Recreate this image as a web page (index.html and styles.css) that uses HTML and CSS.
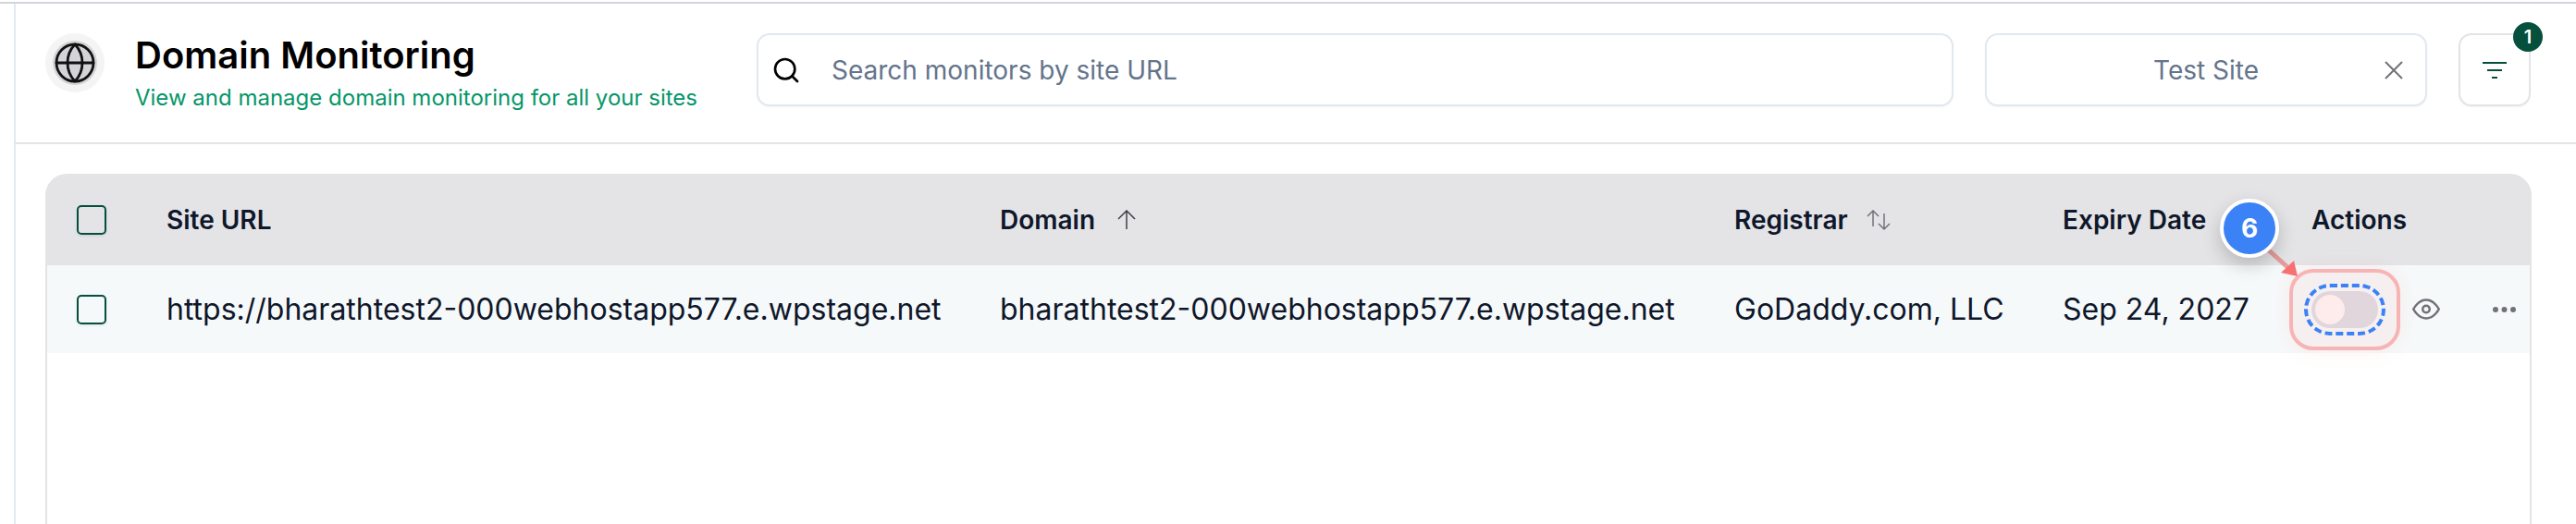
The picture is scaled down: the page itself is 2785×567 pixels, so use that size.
FILE: index.html
```html
<!DOCTYPE html>
<html lang="en">
<head>
<meta charset="utf-8">
<title>Domain Monitoring</title>
<link rel="stylesheet" href="styles.css">
</head>
<body>
<div class="page">
  <header class="topbar">
    <div class="title-group">
      <div class="globe-wrap">
        <div class="globe-inner">
          <svg class="globe" viewBox="0 0 24 24" fill="none" stroke="currentColor" stroke-width="1.4" stroke-linecap="round" stroke-linejoin="round"><circle cx="12" cy="12" r="10"/><path d="M12 2a14.5 14.5 0 0 0 0 20 14.5 14.5 0 0 0 0-20"/><path d="M2 12h20"/></svg>
        </div>
      </div>
      <div class="titles">
        <h1>Domain Monitoring</h1>
        <p>View and manage domain monitoring for all your sites</p>
      </div>
    </div>
    <div class="search">
      <svg class="search-icon" viewBox="0 0 24 24" fill="none" stroke="currentColor" stroke-width="2" stroke-linecap="round"><circle cx="11" cy="11" r="8"/><path d="m21 21-4.3-4.3"/></svg>
      <span>Search monitors by site URL</span>
    </div>
    <div class="site-filter">
      <span>Test Site</span>
      <svg class="x-icon" viewBox="0 0 20 20" fill="none" stroke="currentColor" stroke-width="2"><path d="M1 1l18 18M19 1L1 19"/></svg>
    </div>
    <button class="filter-btn" type="button">
      <svg class="filter-icon" viewBox="0 0 26 18" fill="none" stroke="currentColor" stroke-width="2"><path d="M0 1h26M5 9h16M10 17h6"/></svg>
      <span class="count">1</span>
    </button>
  </header>

  <section class="table">
    <div class="row head">
      <div class="cell"><span class="check"></span></div>
      <div class="cell">Site URL</div>
      <div class="cell">Domain
        <svg class="sort sort-up" viewBox="0 0 22 22" fill="none" stroke="currentColor" stroke-width="1.5"><path d="M11 21V1M2 10l9-9 9 9"/></svg>
      </div>
      <div class="cell">Registrar
        <svg class="sort sort-both" viewBox="0 0 28 22" fill="none" stroke="currentColor" stroke-width="1.5"><path d="M8 18V1M2 7l6-6 6 6"/><path d="M20 4v17M14 15l6 6 6-6"/></svg>
      </div>
      <div class="cell">Expiry Date</div>
      <div class="cell">Actions</div>
    </div>
    <div class="row body">
      <div class="cell"><span class="check"></span></div>
      <div class="cell">https://bharathtest2-000webhostapp577.e.wpstage.net</div>
      <div class="cell">bharathtest2-000webhostapp577.e.wpstage.net</div>
      <div class="cell">GoDaddy.com, LLC</div>
      <div class="cell">Sep 24, 2027</div>
      <div class="cell actions">
        <span class="switch"><span class="knob"></span></span>
        <svg class="eye" viewBox="0 0 24 18" fill="none" stroke="currentColor" stroke-width="2"><path d="M1 9s4-8 11-8 11 8 11 8-4 8-11 8S1 9 1 9z"/><circle cx="12" cy="9" r="3"/></svg>
        <svg class="dots" viewBox="0 0 25 6" fill="currentColor"><circle cx="3" cy="3" r="3"/><circle cx="12.5" cy="3" r="3"/><circle cx="22" cy="3" r="3"/></svg>
      </div>
    </div>
    <div class="highlight"></div>
    <div class="dashed"></div>
    <svg class="pointer" viewBox="0 0 40 40" fill="none"><path d="M2 5L23 24" stroke="#e58a8a" stroke-opacity=".8" stroke-width="5"/><path d="M30 17L16 30L34 34Z" fill="#f87171"/></svg>
    <div class="step">6</div>
  </section>
</div>
</body>
</html>
```

FILE: styles.css
```css
* { box-sizing: border-box; }
html, body { margin: 0; padding: 0; height: 100%; background: #fff; overflow: hidden; }
body { font-family: Inter, "Liberation Sans", sans-serif; color: #0f172a; }

.page {
  height: 567px;
  margin-top: 2px;
  border-top: 2px solid #d4d4dc;
  overflow: hidden;
  position: relative;
}
.page::before {
  content: "";
  position: absolute;
  left: 15px;
  top: 0;
  bottom: 0;
  width: 2px;
  background: #e2e8f4;
}

.topbar {
  height: 152px;
  border-bottom: 2px solid #e4e4e7;
  margin-left: 17px;
  padding: 32px 49px 0 32px;
  display: flex;
  align-items: flex-start;
}
.title-group { display: flex; width: 769px; flex: none; }
.globe-wrap {
  width: 64px; height: 64px; border-radius: 50%;
  background: #f4f4f5;
  display: flex; align-items: center; justify-content: center;
  flex: none;
}
.globe-inner {
  width: 48px; height: 48px; border-radius: 50%;
  background: #d4d4d8;
  display: flex; align-items: center; justify-content: center;
  color: #111;
}
.globe { width: 48px; height: 48px; flex: none; }
.titles { margin-left: 33px; }
.titles h1 { margin: 0; font-size: 40px; line-height: 48px; font-weight: 600; color: #000; }
.titles p { margin: 6px 0 0; font-size: 24px; line-height: 32px; color: #059669; }

.search, .site-filter, .filter-btn {
  height: 79px;
  border: 2px solid #e2e8f0;
  border-radius: 14px;
  background: #fff;
  box-shadow: 0 1px 2px rgba(0,0,0,.05);
  flex: none;
}
.search {
  width: 1294px;
  display: flex; align-items: center;
  padding-left: 14px;
  font-size: 28px; color: #64748b;
}
.search-icon { width: 32px; height: 32px; color: #000; margin-right: 33px; flex: none; }
.site-filter {
  width: 478px;
  margin-left: 34px;
  display: flex; align-items: center; justify-content: center;
  position: relative;
  font-size: 28px; color: #64748b;
}
.x-icon { position: absolute; right: 24px; top: 28px; width: 20px; height: 20px; color: #71717a; }
.filter-btn {
  width: 78px;
  margin-left: 34px;
  border-color: #e4e4e7;
  position: relative;
  padding: 0;
  display: flex; align-items: center; justify-content: center;
  color: #05503c;
}
.filter-icon { width: 26px; height: 18px; }
.count {
  position: absolute;
  top: -14px; right: -15px;
  width: 32px; height: 32px; border-radius: 50%;
  background: #05503c; color: #fff;
  font: 600 20px/32px Inter, sans-serif;
  text-align: center;
}

.table {
  position: relative;
  margin: 32px 0 0 49px;
  width: 2688px;
  height: 400px;
  border-left: 2px solid #e4e4e7;
  border-right: 2px solid #e4e4e7;
  border-radius: 24px 24px 0 0;
}
.row {
  display: grid;
  grid-template-columns: 129px 901px 794px 355px 269px 1fr;
  align-items: center;
}
.row .cell:first-child { padding-left: 32px; }
.head {
  height: 99px;
  background: #e4e4e7;
  border-radius: 24px 24px 0 0;
  font-size: 28px;
  font-weight: 600;
  margin: 0 -2px;
  grid-template-columns: 131px 901px 794px 355px 269px 1fr;
}
.head .cell:first-child { padding-left: 34px; }
.body {
  height: 95px;
  background: #f6f9fa;
  font-size: 32px;
}
.cell { display: flex; align-items: center; white-space: nowrap; }
.check {
  width: 32px; height: 32px;
  border: 2px solid #05503c;
  border-radius: 5px;
  box-shadow: 0 1px 3px rgba(0,0,0,.1);
  display: block;
}
.sort { margin-left: 23px; color: #3f3f46; }
.sort-up { width: 22px; height: 22px; }
.sort-both { width: 28px; height: 24px; margin-left: 19px; color: #71717a; }

.switch {
  width: 72px; height: 40px; border-radius: 20px;
  background: #e0dfe4;
  display: block;
  padding: 4px;
  flex: none;
  box-shadow: 0 0 0 4px rgba(255,255,255,.25);
}
.knob { display: block; width: 32px; height: 32px; border-radius: 50%; background: #fff5f5; }
.eye { width: 30px; height: 23px; margin-left: 37px; color: #71717a; flex: none; }
.dots { width: 25px; height: 6px; margin-left: 57px; color: #71717a; flex: none; }

.highlight {
  position: absolute;
  left: 2424px; top: 103px;
  width: 120px; height: 88px;
  border: 4px solid #f8b4b4;
  border-radius: 26px;
  background: rgba(239,68,68,.05);
  box-shadow: 0 0 24px rgba(239,68,68,.08);
  pointer-events: none;
}
.dashed {
  position: absolute;
  left: 2440px; top: 119px;
  width: 88px; height: 56px;
  border: 4px dashed #3b82f6;
  border-radius: 28px;
}
.pointer {
  position: absolute;
  left: 2399px; top: 77px;
  width: 40px; height: 40px;
  overflow: visible;
}
.step {
  position: absolute;
  left: 2349px; top: 27px;
  width: 64px; height: 64px;
  border-radius: 50%;
  background: #3b82f6;
  border: 4px solid #fff;
  box-shadow: 0 8px 20px rgba(0,0,0,.2);
  color: #fff;
  font-size: 28px;
  font-weight: 700;
  line-height: 56px;
  text-align: center;
}
```
